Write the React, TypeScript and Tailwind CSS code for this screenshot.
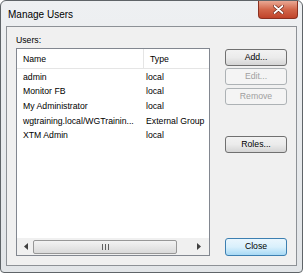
import React from "react";

const users = [
  { name: "admin", type: "local" },
  { name: "Monitor FB", type: "local" },
  { name: "My Administrator", type: "local" },
  { name: "wgtraining.local/WGTrainin...", type: "External Group" },
  { name: "XTM Admin", type: "local" },
];

const Btn = ({
  label,
  disabled,
  primary,
  className,
}: {
  label: string;
  disabled?: boolean;
  primary?: boolean;
  className?: string;
}) => {
  let look =
    "border-[#707070] bg-gradient-to-b from-[#f2f2f2] via-[#ebebeb] to-[#d5d5d5] text-black";
  if (disabled) look = "border-[#adb2b5] bg-[#f4f4f4] text-[#a0a0a0]";
  if (primary)
    look =
      "border-[#3c7fb1] bg-gradient-to-b from-[#eaf6fd] via-[#d9f0fc] to-[#a7d9f5] text-black";
  return (
    <div
      className={`flex h-[17px] w-[62px] items-center justify-center rounded-[3px] border text-[8.7px] ${look} ${className ?? ""}`}
    >
      {label}
    </div>
  );
};

export default function App() {
  return (
    <div className="h-[273px] w-[303px] bg-white font-['Liberation_Sans',Arial,sans-serif]">
      <div className="flex h-[273px] w-[303px] flex-col rounded-t-[6px] rounded-b-[4px] border border-[#5f6468] bg-gradient-to-b from-[#eef0f2] to-[#e2e5e8] px-[5px] pb-[6px]">
        {/* title bar */}
        <div className="flex h-[25px] items-start justify-between">
          <span className="mt-[6px] pl-[2px] text-[10px] text-black">Manage Users</span>
          <div className="mr-[-1px] flex h-[18px] w-[40px] items-center justify-center rounded-b-[4px] border border-t-0 border-[#8b3020] bg-gradient-to-b from-[#e9a894] via-[#d2664a] to-[#c0432a]">
            <svg width="11" height="9" viewBox="0 0 11 9">
              <path d="M1.5 1 L9.5 8 M9.5 1 L1.5 8" stroke="#6b2316" strokeWidth="3.2" strokeLinecap="round" />
              <path d="M1.5 1 L9.5 8 M9.5 1 L1.5 8" stroke="#ffffff" strokeWidth="1.8" strokeLinecap="round" />
            </svg>
          </div>
        </div>

        {/* client area */}
        <div className="flex flex-1 border border-[#8d9196] bg-[#f0f0f0] pl-[9px] pr-[9px] pb-[9px]">
          <div className="flex flex-col">
            <div className="mt-[7px] h-[12px] text-[8.7px] leading-[12px] text-black">Users:</div>
            <div className="mt-[2px] flex h-[208px] w-[194px] flex-col border border-[#828790] bg-white">
              <div className="flex h-[20px] border-b border-[#e5e5e5] text-[8.7px] text-black">
                <div className="flex w-[127px] items-center border-r border-[#e5e5e5] pl-[6px] pt-[2px]">
                  Name
                </div>
                <div className="flex flex-1 items-center pl-[6px] pt-[2px]">Type</div>
              </div>
              <div className="flex flex-1 flex-col pt-[1px] text-[8.7px] text-black">
                {users.map((u) => (
                  <div key={u.name} className="flex h-[14.6px] items-center">
                    <span className="w-[128px] overflow-hidden whitespace-nowrap pl-[6px]">{u.name}</span>
                    <span className="pl-[1px] whitespace-nowrap">{u.type}</span>
                  </div>
                ))}
              </div>
              {/* horizontal scrollbar */}
              <div className="flex h-[17px] items-center bg-[#f0f0f0] px-[1px]">
                <div className="flex w-[15px] items-center justify-center">
                  <svg width="4" height="7" viewBox="0 0 4 7">
                    <path d="M4 0 L0 3.5 L4 7 Z" fill="#404040" />
                  </svg>
                </div>
                <div className="flex h-[14px] w-[144px] items-center justify-center rounded-[2px] border border-[#979797] bg-gradient-to-b from-[#f3f3f3] to-[#dadada]">
                  <svg width="7" height="6" viewBox="0 0 7 6">
                    <path d="M0.5 0 V6 M3.5 0 V6 M6.5 0 V6" stroke="#606060" strokeWidth="1" />
                  </svg>
                </div>
                <div className="flex flex-1 items-center justify-end pr-[7px]">
                  <svg width="4" height="7" viewBox="0 0 4 7">
                    <path d="M0 0 L4 3.5 L0 7 Z" fill="#404040" />
                  </svg>
                </div>
              </div>
            </div>
          </div>

          <div className="ml-[15px] flex flex-1 flex-col">
            <Btn label="Add..." className="mt-[22px]" />
            <Btn label="Edit..." disabled className="mt-[2px]" />
            <Btn label="Remove" disabled className="mt-[3px]" />
            <Btn label="Roles..." className="mt-[31px]" />
            <div className="flex-1" />
            <Btn label="Close" primary className="h-[18px]" />
          </div>
        </div>
      </div>
    </div>
  );
}
